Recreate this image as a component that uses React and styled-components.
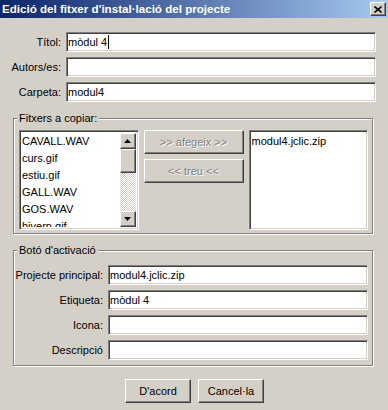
import React from "react";
import styled, { createGlobalStyle, css } from "styled-components";

const GlobalStyle = createGlobalStyle`
  html, body { margin: 0; padding: 0; background: #d4d0c8; }
  body { font-family: "Liberation Sans", Arial, sans-serif; font-size: 11px; color: #000; }
  * { box-sizing: border-box; }
`;

const sunken = css`
  background: #fff;
  border: 1px solid;
  border-color: #808080 #fff #fff #808080;
  box-shadow: inset 1px 1px 0 #404040, inset -1px -1px 0 #d4d0c8;
`;

const raised = css`
  background: #d4d0c8;
  border: 1px solid;
  border-color: #fff #404040 #404040 #fff;
  box-shadow: inset -1px -1px 0 #808080, inset 1px 1px 0 #d4d0c8;
`;

const Window = styled.div`
  width: 388px;
  height: 410px;
  background: #d4d0c8;
  display: flex;
  flex-direction: column;
  overflow: hidden;
`;

const TitleBar = styled.div`
  height: 18px;
  display: flex;
  align-items: center;
  justify-content: space-between;
  padding: 0 2px 0 2px;
  background: linear-gradient(to right, #0a246a, #a6caf0);
`;

const TitleText = styled.span`
  color: #fff;
  font-family: "Liberation Sans", Arial, sans-serif;
  font-weight: bold;
  font-size: 11.6px;
  line-height: 18px;
  white-space: nowrap;
`;

const CloseButton = styled.div`
  ${raised};
  width: 16px;
  height: 14px;
  display: flex;
  align-items: center;
  justify-content: center;
`;

const TopForm = styled.div`
  display: grid;
  grid-template-columns: 50px 1fr;
  column-gap: 5px;
  row-gap: 5px;
  align-items: center;
  padding: 14px 12px 0 11px;
`;

const Label = styled.label`
  justify-self: end;
  white-space: nowrap;
  line-height: 13px;
`;

const TextField = styled.div`
  ${sunken};
  height: 20px;
  padding: 0 2px 0 1px;
  display: flex;
  align-items: center;
  white-space: nowrap;
  line-height: 13px;
`;

const Caret = styled.span`
  display: inline-block;
  width: 1px;
  height: 14px;
  margin-left: 1px;
  background: #000;
`;

const Group = styled.fieldset`
  margin: ${(p) => p.$top}px 15px 0 13px;
  padding: ${(p) => p.$pad};
  border: 1px solid #808080;
  box-shadow: inset 1px 1px 0 #fff, 1px 1px 0 #fff;
  min-width: 0;
`;

const Legend = styled.legend`
  font-size: 11px;
  line-height: 13px;
  padding: 0 2px;
  margin-left: -2px;
  background: #d4d0c8;
`;

const CopyGrid = styled.div`
  display: grid;
  grid-template-columns: 1fr 100px 1fr;
  column-gap: 5px;
`;

const ListBox = styled.div`
  ${sunken};
  height: 100px;
  padding: 2px;
  display: flex;
  overflow: hidden;
`;

const ListItems = styled.div`
  flex: 1;
  min-width: 0;
  padding-left: 0;
  overflow: hidden;
`;

const ListItem = styled.div`
  line-height: 17px;
  white-space: nowrap;
`;

const Scrollbar = styled.div`
  width: 16px;
  display: flex;
  flex-direction: column;
`;

const ScrollButton = styled.div`
  ${raised};
  height: 16px;
  display: flex;
  align-items: center;
  justify-content: center;
`;

const Thumb = styled.div`
  ${raised};
  height: 24px;
`;

const Track = styled.div`
  flex: 1;
  background-color: #d4d0c8;
  background-image: conic-gradient(#fff 25%, #d4d0c8 0 50%, #fff 0 75%, #d4d0c8 0);
  background-size: 2px 2px;
`;

const MoveColumn = styled.div`
  display: flex;
  flex-direction: column;
  gap: 5px;
`;

const PushButton = styled.div`
  ${raised};
  height: 24px;
  width: ${(p) => (p.$width ? `${p.$width}px` : "auto")};
  display: flex;
  align-items: center;
  justify-content: center;
  white-space: nowrap;
  font-size: 11px;
  color: ${(p) => (p.$disabled ? "#808080" : "#000")};
  text-shadow: ${(p) => (p.$disabled ? "1px 1px 0 #fff" : "none")};
`;

const ActivationGrid = styled.div`
  display: grid;
  grid-template-columns: 84px 1fr;
  column-gap: 5px;
  row-gap: 5px;
  align-items: center;
`;

const ButtonRow = styled.div`
  display: flex;
  justify-content: center;
  gap: 7px;
  margin-top: 13px;
  padding-left: 1px;
`;

const Arrow = ({ up }) => (
  <svg width="7" height="4" viewBox="0 0 7 4">
    <polygon points={up ? "3.5,0 7,4 0,4" : "0,0 7,0 3.5,4"} fill="#000" />
  </svg>
);

const CloseGlyph = () => (
  <svg width="8" height="7" viewBox="0 0 8 7">
    <path d="M0.5 0.5 L7.5 6.5 M7.5 0.5 L0.5 6.5" stroke="#000" strokeWidth="1.6" fill="none" />
  </svg>
);

const files = ["CAVALL.WAV", "curs.gif", "estiu.gif", "GALL.WAV", "GOS.WAV", "hivern.gif"];

export default function App() {
  return (
    <>
      <GlobalStyle />
      <Window>
        <TitleBar>
          <TitleText>Edició del fitxer d'instal·lació del projecte</TitleText>
          <CloseButton>
            <CloseGlyph />
          </CloseButton>
        </TitleBar>

        <TopForm>
          <Label>Títol:</Label>
          <TextField>
            mòdul 4<Caret />
          </TextField>
          <Label>Autors/es:</Label>
          <TextField />
          <Label>Carpeta:</Label>
          <TextField>modul4</TextField>
        </TopForm>

        <Group $top={10} $pad="5px 4px 3px 5px">
          <Legend>Fitxers a copiar:</Legend>
          <CopyGrid>
            <ListBox>
              <ListItems>
                {files.map((f) => (
                  <ListItem key={f}>{f}</ListItem>
                ))}
              </ListItems>
              <Scrollbar>
                <ScrollButton>
                  <Arrow up />
                </ScrollButton>
                <Thumb />
                <Track />
                <ScrollButton>
                  <Arrow />
                </ScrollButton>
              </Scrollbar>
            </ListBox>
            <MoveColumn>
              <PushButton $disabled>&gt;&gt; afegeix &gt;&gt;</PushButton>
              <PushButton $disabled>&lt;&lt; treu &lt;&lt;</PushButton>
            </MoveColumn>
            <ListBox>
              <ListItems>
                <ListItem>modul4.jclic.zip</ListItem>
              </ListItems>
            </ListBox>
          </CopyGrid>
        </Group>

        <Group $top={10} $pad="8px 4px 5px 5px">
          <Legend>Botó d'activació</Legend>
          <ActivationGrid>
            <Label>Projecte principal:</Label>
            <TextField>modul4.jclic.zip</TextField>
            <Label>Etiqueta:</Label>
            <TextField>mòdul 4</TextField>
            <Label>Icona:</Label>
            <TextField />
            <Label>Descripció</Label>
            <TextField />
          </ActivationGrid>
        </Group>

        <ButtonRow>
          <PushButton $width={66}>D'acord</PushButton>
          <PushButton $width={66}>Cancel·la</PushButton>
        </ButtonRow>
      </Window>
    </>
  );
}
